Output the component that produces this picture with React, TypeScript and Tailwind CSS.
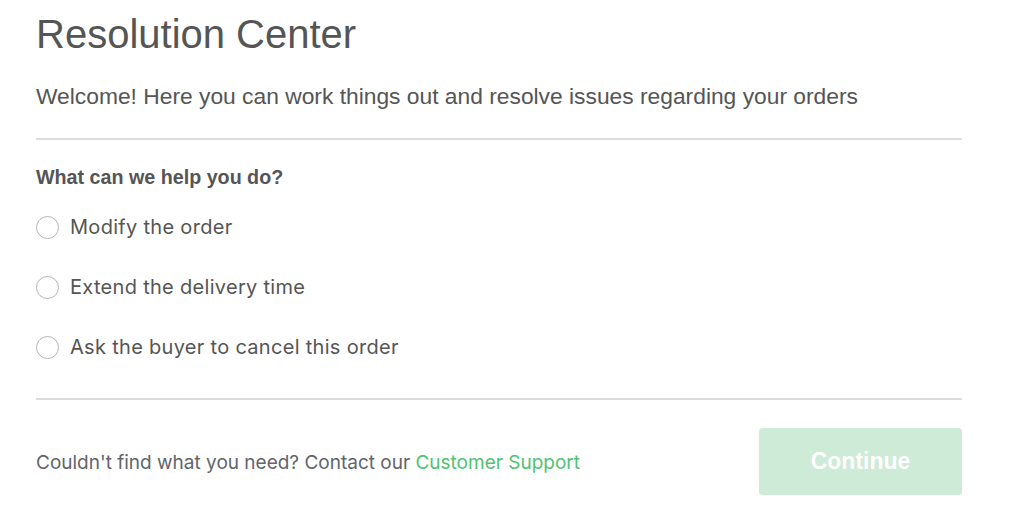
import React from "react";

const options = [
  "Modify the order",
  "Extend the delivery time",
  "Ask the buyer to cancel this order",
];

export default function App() {
  return (
    <div className="w-[1024px] h-[522px] bg-white overflow-hidden">
      <div className="ml-[36px] w-[926px] pt-[12px]">
        <h1
          className="text-[40px] leading-[44px] text-[#555555] font-normal"
          style={{ fontFamily: '"Liberation Sans", Arial, sans-serif' }}
        >
          Resolution Center
        </h1>
        <p
          className="mt-[27px] text-[22.8px] leading-[26px] text-[#555555]"
          style={{ fontFamily: '"Liberation Sans", Arial, sans-serif' }}
        >
          Welcome! Here you can work things out and resolve issues regarding your orders
        </p>
        <div className="mt-[29px] h-[2px] bg-[#dddddd]" />
        <div
          className="mt-[26px] text-[19.7px] leading-[22px] font-bold text-[#555555]"
          style={{ fontFamily: '"Liberation Sans", Arial, sans-serif' }}
        >
          What can we help you do?
        </div>
        <div className="mt-[27px] flex flex-col gap-[36px]">
          {options.map((o) => (
            <label key={o} className="flex items-center h-[24px]">
              <span className="w-[23px] h-[23px] rounded-full border border-[#b5b5b5] bg-white" />
              <span
                className="ml-[11px] text-[20px] leading-[24px] text-[#555555] tracking-[0.3px]"
                style={{ fontFamily: "Inter, sans-serif" }}
              >
                {o}
              </span>
            </label>
          ))}
        </div>
        <div className="mt-[39px] h-[2px] bg-[#dddddd]" />
        <div className="mt-[28px] flex items-center justify-between">
          <p
            className="pt-[3px] text-[19px] leading-[24px] text-[#62646a]"
            style={{ fontFamily: "Inter, sans-serif" }}
          >
            Couldn't find what you need? Contact our{" "}
            <span className="text-[#50c371]">Customer Support</span>
          </p>
          <button
            className="w-[203px] h-[67px] rounded-[4px] bg-[#cdebd6] text-white text-[23px] font-bold"
            style={{ fontFamily: '"Liberation Sans", Arial, sans-serif' }}
          >
            Continue
          </button>
        </div>
      </div>
    </div>
  );
}
